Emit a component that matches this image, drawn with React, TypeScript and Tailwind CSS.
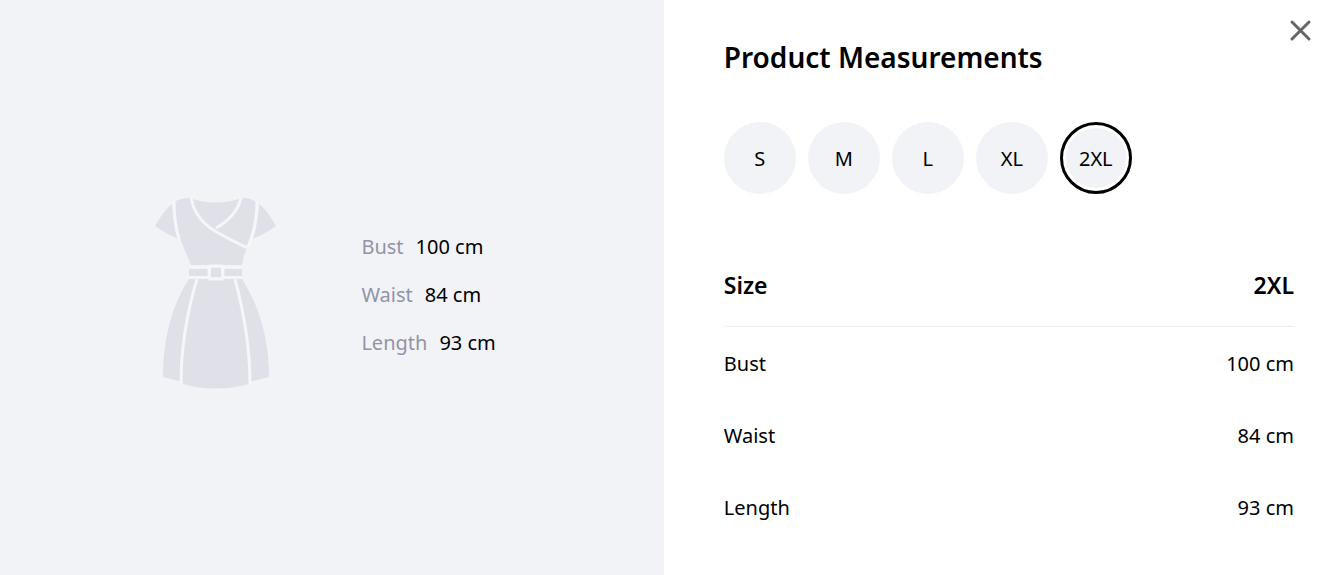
import { useState } from "react";

const measurements = [
  { size: "S", bust: 84, waist: 68, length: 89 },
  { size: "M", bust: 88, waist: 72, length: 90 },
  { size: "L", bust: 92, waist: 76, length: 91 },
  { size: "XL", bust: 96, waist: 80, length: 92 },
  { size: "2XL", bust: 100, waist: 84, length: 93 },
];

const DressIcon = () => (
  <svg viewBox="0 0 124 194" className="w-[124px] h-[194px] shrink-0" aria-hidden="true">
    <g fill="#dfe0e8">
      <path d="M1 30C6 21 12 13 18 8C19 20 20 31 24 43Q12 38 1 30Z" />
      <path d="M122 30C117 21 112 13 105 8C104 20 103 31 99 43Q111 38 122 30Z" />
      <path d="M20 6Q27 2 36 2Q61 11 88 2Q96 2 103 6C103 24 99 38 94 51Q89 59 88 69H37C30 52 20 32 20 6Z" />
      <path d="M35 73H54V80H35ZM70 73H88V80H70ZM57 72H67V81H57Z" />
      <path d="M35 83H88C103 106 115 139 115 181L95 186V188Q61 197 29 188V186L9 181C9 139 20 106 35 83Z" />
    </g>
    <g fill="none" stroke="#f5f6fa" strokeWidth="3">
      <path d="M20 5C20 21 22 33 25 43M103 5C103 23 100 37 94 51" />
      <path d="M37 1C41 29 65 38 94 52M87 1C85 15 73 26 62 32" />
      <path d="M35 71H54M70 71H88M35 81H54M70 81H88" strokeWidth="2" />
      <rect x="55" y="70" width="14" height="13" rx="1" />
      <path d="M43 83C34 113 27 147 27 188M81 83C89 113 96 147 96 188" />
    </g>
  </svg>
);

const App = () => {
  const [selected, setSelected] = useState("2XL");
  const current = measurements.find((item) => item.size === selected) ?? measurements[4];
  const rows = [
    { label: "Bust", value: `${current.bust} cm` },
    { label: "Waist", value: `${current.waist} cm` },
    { label: "Length", value: `${current.length} cm` },
  ];

  return (
    <div className="relative min-h-screen flex bg-white text-black text-xl font-['Noto_Sans',sans-serif]">
      <section className="w-[49.5%] flex items-center justify-center gap-[83px] pt-[10px] bg-[#f2f3f7]">
        <DressIcon />
        <dl className="w-37 pt-1">
          {rows.map((row) => (
            <div key={row.label} className="flex gap-3 leading-[48px] whitespace-nowrap">
              <dt className="text-[#9293a8]">{row.label}</dt>
              <dd>{row.value}</dd>
            </div>
          ))}
        </dl>
      </section>

      <section className="flex-1 pt-9 pl-15 pr-[47px]">
        <h1 className="text-[28px] leading-[42px] font-semibold">Product Measurements</h1>
        <div className="mt-11 flex gap-3">
          {measurements.map(({ size }) => (
            <button
              key={size}
              type="button"
              aria-pressed={size === selected}
              onClick={() => setSelected(size)}
              className={
                size === selected
                  ? "size-18 pt-0.5 rounded-full border-3 border-black bg-[#f2f3f7] inset-ring-3 inset-ring-white"
                  : "size-18 pt-0.5 rounded-full bg-[#f2f3f7]"
              }
            >
              {size}
            </button>
          ))}
        </div>

        <table className="mt-[51px] w-full">
          <thead>
            <tr className="h-[81px] border-b border-[#ededf0] text-[23px]">
              <th scope="col" className="text-left font-semibold">Size</th>
              <th scope="col" className="text-right font-semibold">{current.size}</th>
            </tr>
          </thead>
          <tbody>
            {rows.map((row) => (
              <tr key={row.label} className="h-18">
                <th scope="row" className="pt-1 text-left font-normal">{row.label}</th>
                <td className="pt-1 text-right">{row.value}</td>
              </tr>
            ))}
          </tbody>
        </table>
      </section>

      <button type="button" aria-label="Close" className="absolute top-[18px] right-7 text-[#666]">
        <svg viewBox="0 0 25 25" className="size-[25px]" fill="none" stroke="currentColor" strokeWidth="3" strokeLinecap="round">
          <path d="M4 4L21 21M21 4L4 21" />
        </svg>
      </button>
    </div>
  );
};

export default App;
